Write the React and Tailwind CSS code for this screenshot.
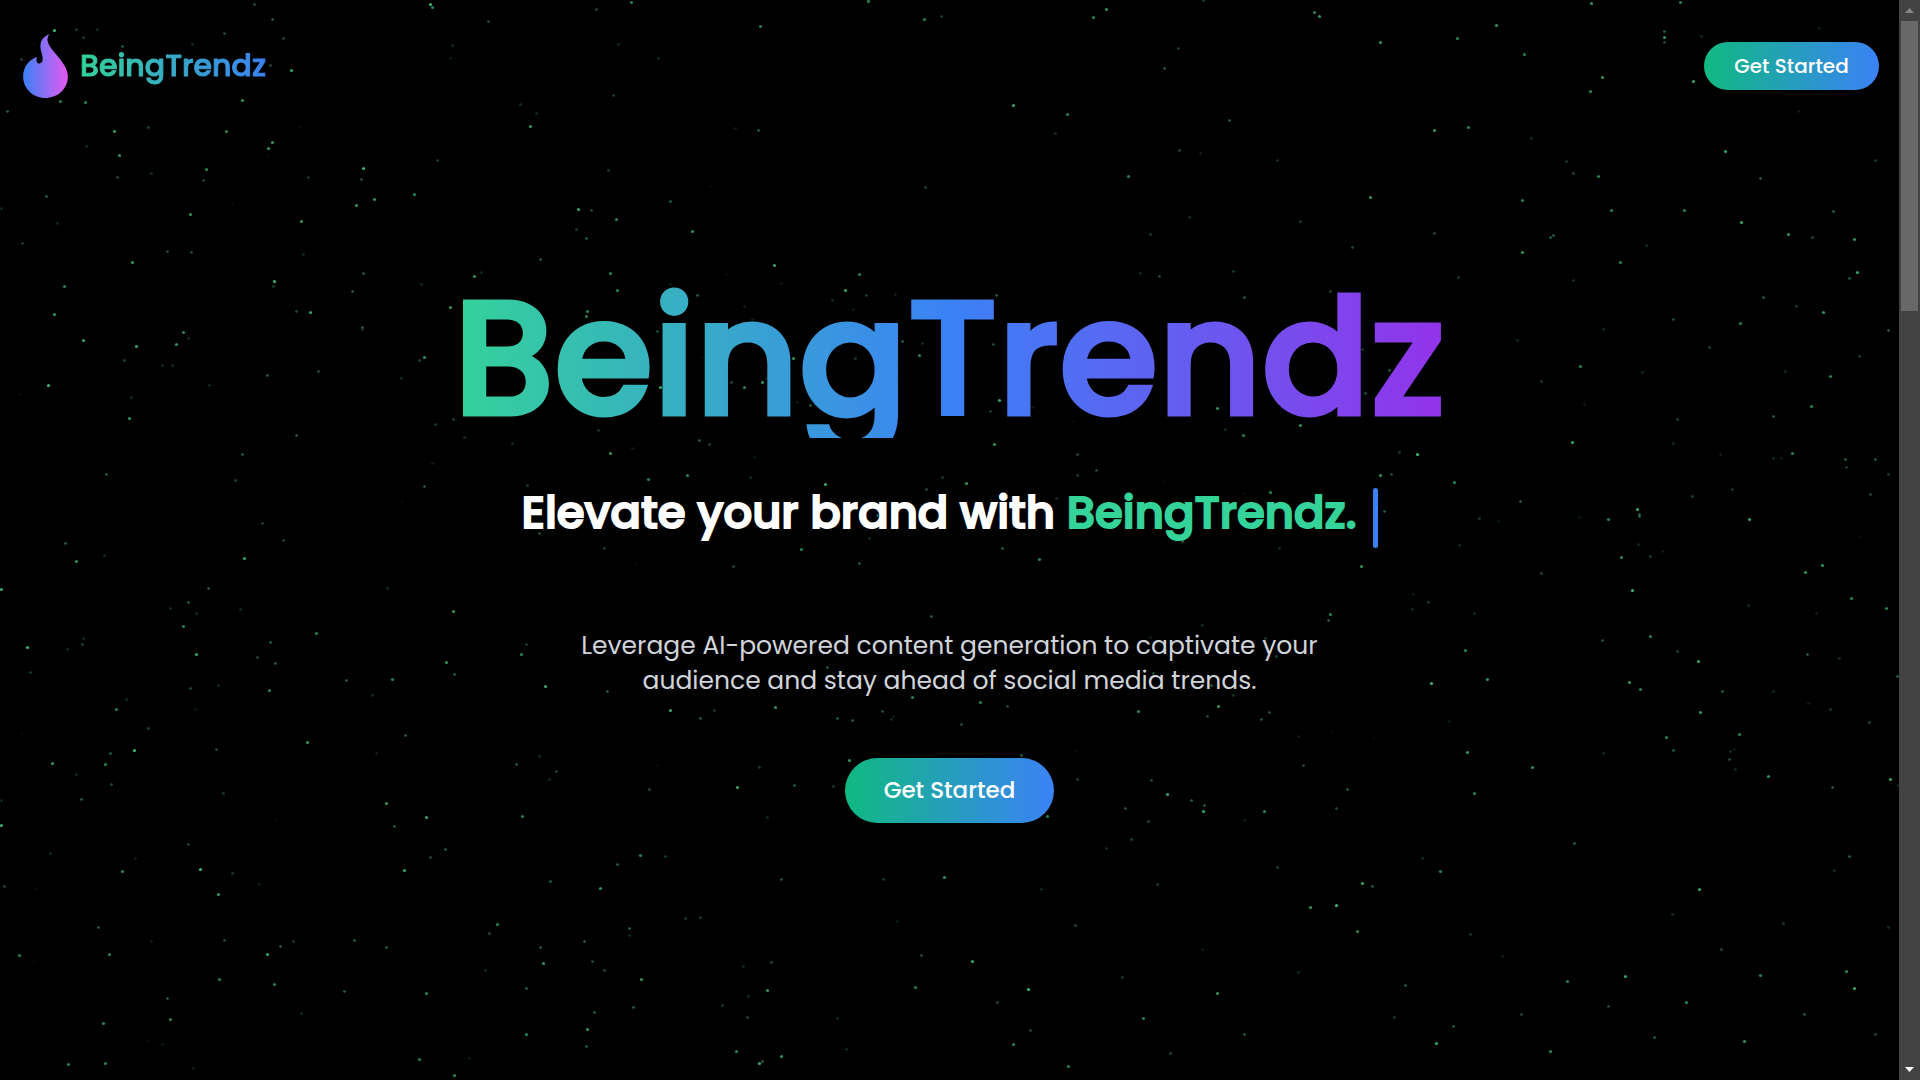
import React from "react";

// Each sector: origin, units per pixel on both axes, and [x, y, brightness 1-10] triples.
const SECTORS = [
  {
    ox: 0, oy: 0, sx: 3, sy: 3,
    stars: [
      [761,12,5],[816,58,6],[673,99,5],[848,115,5],[575,132,3],[811,194,5],[873,209,9],[727,300,8],[161,91,10],[229,87,4],[290,88,3],[250,112,4],[103,131,1],[367,139,6],[63,177,5],[179,302,7],[255,307,7],[20,332,6],[445,380,5],[343,389,2],[897,380,1],
    ],
  },
  {
    ox: 1660, oy: 0, sx: 3, sy: 3,
    stars: [[60,7,7],[12,94,6],[13,112,8],[13,125,5],[122,108,3],[477,85,2],[99,243,9],[415,333,2]],
  },
  {
    ox: 0, oy: 130, sx: 3, sy: 3,
    stars: [
      [343,4,8],[677,4,7],[257,49,3],[804,54,8],[817,36,8],[358,76,8],[801,76,1],[1311,91,4],[618,116,7],[453,128,3],[1089,115,10],[351,140,5],[609,149,5],[925,142,4],[1083,147,5],[137,197,6],[1242,192,7],[1121,206,8],[1068,224,8],[697,221,1],[2,233,3],[570,251,8],[170,279,3],[904,273,8],[65,340,4],[500,364,5],[574,367,5],[908,372,3],[396,395,8],[1088,429,6],[193,469,7],[822,453,10],[818,467,4],[1264,461,3],[1057,482,6],[889,543,5],[929,547,9],[162,552,8],[1085,590,6],[1085,596,3],[548,605,7],[565,625,3],[250,631,9],[528,641,8],[409,649,9],[371,691,5],[1271,681,8],[1256,691,5],[485,704,3],[515,704,3],[953,724,5],[802,734,6],[1204,744,3],[144,765,10],[628,766,3],[61,791,1],[393,800,3],[386,863,8],[1305,881,4],[888,915,6],[727,973,6],[1296,1000,2],[319,1032,6],[705,1051,5],[1273,1068,6],[1206,1113,1],[786,1180,2],
    ],
  },
  {
    ox: 440, oy: 270, sx: 3, sy: 3,
    stars: [
      [102,19,8],[122,7,3],[511,8,7],[531,61,7],[30,110,8],[441,124,7],[439,138,7],[691,41,2],[772,76,6],[860,12,1],[912,107,2],[1022,39,2],[1258,13,7],[1214,61,9],[1175,91,3],[1279,76,4],[1364,73,2],[1238,116,2],[937,148,2],[650,184,5],[785,261,1],[1059,263,8],[660,350,9],[872,335,5],[912,350,7],[967,335,8],[979,325,2],[1070,395,2],[1111,405,6],[1246,265,4],[1386,212,6],[1447,220,3],[1438,255,7],[40,448,5],[72,500,3],[217,520,3],[474,479,4],[511,549,8],[576,535,2],[778,510,6],[808,523,5],[941,562,2],
    ],
  },
  {
    ox: 940, oy: 270, sx: 3, sy: 3,
    stars: [
      [601,8,3],[657,19,5],[880,3,4],[1169,63,5],[913,80,6],[167,75,6],[158,223,5],[176,389,9],[151,424,4],[275,412,2],[399,454,1],[161,522,8],[412,553,5],[831,414,8],[854,476,3],[910,496,7],[1081,464,8],[1265,238,4],[1346,301,6],[1275,369,5],[1371,287,4],[1349,322,4],[1377,547,4],[1431,552,7],[1555,22,4],
    ],
  },
  {
    ox: 500, oy: 470, sx: 3, sy: 3,
    stars: [
      [82,45,4],[445,27,7],[560,16,7],[751,21,3],[974,42,9],[1279,56,5],[1326,20,4],[1397,38,8],[118,188,5],[312,233,4],[409,278,1],[698,289,5],[902,236,7],[1107,204,3],[1078,280,6],[719,133,4],[1132,136,6],[1507,235,6],[1617,267,7],
    ],
  },
  {
    ox: 980, oy: 470, sx: 3, sy: 3,
    stars: [[290,14,4],[349,1,5],[548,32,1],[228,83,3],[793,70,1],[871,67,7],[1199,15,8],[1232,11,5],[1212,124,6],[896,233,3],[1144,288,8],[606,214,6]],
  },
  {
    ox: 560, oy: 610, sx: 3, sy: 3,
    stars: [[1114,19,6],[801,171,6],[1057,260,7],[1261,275,7],[1342,288,5],[965,303,5],[992,328,3],[998,319,2],[1203,342,5],[1382,434,6],[1460,618,7]],
  },
  {
    ox: 1000, oy: 610, sx: 3, sy: 3,
    stars: [
      [989,12,7],[985,30,6],[605,46,3],[449,80,2],[796,84,4],[827,139,5],[882,91,3],[460,190,5],[634,225,6],[700,254,4],[655,289,8],[622,317,5],[415,304,7],[807,306,5],[782,328,5],[993,363,1],[894,379,2],[1120,384,1],[225,422,1],[910,465,5],[231,506,5],[454,509,5],[501,552,9],[572,569,6],[611,584,6],[609,604,9],[376,594,5],[443,632,5],[733,630,2],[792,604,7],[1008,595,5],[1042,537,6],[393,686,5],
    ],
  },
  {
    ox: 1400, oy: 400, sx: 3, sy: 3,
    stars: [
      [551,11,2],[1234,19,7],[1120,48,6],[831,58,5],[515,126,9],[820,129,3],[52,161,7],[960,161,2],[1119,175,3],[1142,175,2],[1177,160,7],[1335,178,6],[1425,178,6],[1339,202,4],[1463,223,4],[162,247,7],[996,268,4],[1411,281,5],[875,287,5],[360,304,6],[712,328,9],[716,341,6],[717,348,6],[236,353,4],[294,362,2],[537,350,2],[625,356,7],[1047,356,9],[1378,408,1],[177,436,3],[715,432,3],[786,454,2],[663,470,7],[749,469,4],[1265,494,8],[422,520,5],[1214,517,8],[696,570,10],[38,583,2],[83,606,4],[37,626,3],[223,640,3],[1353,594,7],[1044,616,3],[1459,624,7],[1249,640,2],[607,720,5],[750,708,7],[196,751,7],[831,754,5],[1221,763,6],[894,784,9],[1317,775,3],[94,850,10],[261,836,8],[688,845,8],[719,867,7],[965,874,6],[1120,872,3],[1223,909,2],[1490,829,6],[900,935,8],[1290,927,4],[146,963,2],[1406,966,5],[797,1011,7],[820,1049,6],[1018,1003,7],[200,1055,8],[610,1060,3],[990,1054,3],[1002,1047,2],[987,1078,5],[1004,1108,3],[396,1101,8],[1105,1127,8],[1470,1138,9],[1493,1156,3],[222,1179,7],[1296,1160,6],
    ],
  },
  {
    ox: 0, oy: 520, sx: 1.823, sy: 2.8,
    stars: [
      [478,9,3],[118,63,6],[516,57,5],[139,116,8],[189,97,3],[444,106,9],[1,193,9],[379,189,6],[705,190,3],[343,229,6],[310,247,3],[358,259,3],[438,250,3],[826,254,8],[333,296,7],[576,316,7],[152,329,3],[149,347,5],[122,360,3],[49,356,10],[492,341,6],[358,376,9],[469,384,5],[501,401,6],[813,398,8],[827,430,6],[54,426,4],[959,346,4],[950,376,7],[630,447,6],[714,445,7],[346,469,5],[398,463,3],[490,477,7],[678,491,3],[993,465,9],[1107,478,6],[229,502,3],[212,528,7],[355,529,2],[1221,532,9],[1276,555,6],[1301,533,4],[1412,524,8],[1526,553,6],[1554,559,6],[269,583,5],[38,597,1],[739,603,6],[559,621,8],[245,643,10],[394,641,5],[200,652,6],[685,652,2],[95,681,8],[192,682,7],[983,660,3],[941,682,6],[138,710,3],[1014,704,5],[1001,724,3],[203,738,5],[407,763,4],[148,781,6],[1,785,3],[704,791,8],[776,831,9],[718,857,6],[952,830,7],[2,854,9],[501,837,1],[1196,687,1],[1383,691,4],[1343,748,9],[1448,743,6],[1519,745,4],[1184,752,5],[1548,673,8],[1398,831,3],[343,907,5],[91,931,3],[246,946,2],[812,921,6],[783,943,5],[364,977,10],[222,983,7],[423,988,4],[736,981,9],[1166,938,7],[1212,941,4],[1124,964,6],[8,1024,5],[63,1030,1],[473,1020,2],[397,1048,8],[1003,1011,6],[1093,1030,8],[1423,1004,5],[178,1139,6],[906,1132,7],[892,1156,5],[1146,1142,6],[1146,1161,3],[1249,1115,4],[1277,1112,4],[408,1176,5],[275,1178,2],[535,1180,4],[511,1194,6],[646,1176,6],[704,1196,6],[486,1214,9],[198,1216,7],[35,1218,7],[60,1234,1],[985,1196,6],[1065,1179,6],[989,1240,8],[1079,1234,5],[1102,1261,5],[884,1261,3],[1355,1249,3],[1405,1238,5],[399,1286,7],[1168,1286,8],[500,1300,7],[628,1320,6],[776,1323,7],[958,1309,6],[1399,1315,8],[1364,1332,3],[304,1339,6],[1154,1363,6],[1316,1359,4],[1083,1378,6],[1362,1391,5],[309,1396,7],[548,1381,3],[187,1409,7],[1070,1424,8],[958,1438,7],[1526,1394,3],[269,1456,1],[296,1468,2],[1068,1474,6],[1341,1488,7],[1424,1500,8],[1390,1515,6],[1383,1521,9],[1542,1482,3],[764,1509,7],[124,1522,7],[192,1521,7],[352,1533,2],[827,1555,7],[855,1506,2],
    ],
  },
  {
    ox: 430, oy: 0, sx: 1, sy: 1,
    stars: [
      [0,4,10],[2,7,7],[22,45,3],[20,58,2],[58,21,5],[90,104,3],[100,126,8],[106,113,3],[166,9,5],[201,2,7],[330,26,7],[188,44,3],[228,58,3],[183,95,4],[178,170,4],[148,209,9],[161,210,5],[186,219,7],[156,238,6],[110,259,6],[146,229,4],[240,201,6],[262,231,8],[305,128,2],[328,130,6],[280,186,1],[344,265,9],[438,1,7],[494,19,7],[511,16,4],[495,187,5],[583,105,9],[637,114,7],[625,133,3],[663,17,7],[676,9,8],[734,68,6],[748,48,4],[773,0,4],[799,120,6],[749,150,5],[770,153,2],[698,176,7],[720,234,4],[759,217,3],[884,12,7],[889,16,8],[950,42,8],[1004,130,8],[1027,38,7],[1038,127,7],[1066,25,8],[1094,54,7],[1161,3,8],[1004,233,5],[940,197,8],[922,247,5],[870,221,4],[847,160,3],[1092,200,7],[1120,237,6],[1143,173,5],[1172,77,8],[1160,91,7],
    ],
  },
  {
    ox: 1500, oy: 130, sx: 1, sy: 1,
    stars: [
      [31,8,3],[66,31,4],[98,46,7],[111,80,7],[53,105,6],[22,122,8],[73,150,3],[120,132,7],[146,115,3],[184,80,7],[225,21,9],[260,48,6],[241,92,9],[288,104,8],[312,107,5],[333,81,6],[354,109,8],[357,142,9],[349,148,6],[375,30,4],[323,182,8],[296,176,4],[263,167,6],[240,193,7],[209,217,5],[173,189,5],[142,242,3],[103,199,3],[80,236,7],[41,251,4],[17,210,3],[388,200,6],[359,226,4],[330,246,7],[285,241,3],
    ],
  },
  {
    ox: 860, oy: 830, sx: 1, sy: 1,
    stars: [
      [23,49,4],[37,91,2],[84,47,8],[61,125,5],[112,131,9],[55,157,7],[137,172,5],[168,159,10],[170,200,5],[208,236,7],[153,214,7],[181,59,3],[215,95,5],[246,18,3],[262,147,4],[283,188,7],[310,223,5],[297,54,4],[342,119,2],[357,163,8],[384,204,6],[417,37,5],[438,142,3],[450,77,8],[476,75,10],[497,101,7],[502,53,9],[512,56,6],[562,28,3],[580,41,7],[545,155,6],[534,187,4],[576,213,9],[593,196,6],[610,104,4],[642,126,2],[661,184,5],[690,221,7],[707,151,7],[714,13,6],[748,176,5],[765,146,9],[794,207,6],[812,84,3],[826,172,7],[839,59,9],[861,119,5],[884,211,8],[900,145,7],[923,93,4],[944,184,6],[974,40,3],[986,141,7],[994,158,9],[1015,204,5],[989,26,6],[1028,97,3],
    ],
  },
];

const STARS = SECTORS.flatMap((s) =>
  s.stars.map(([x, y, b]) => ({
    cx: Math.round(s.ox + x / s.sx) + 0.5,
    cy: Math.round(s.oy + y / s.sy) + 0.5,
    r: b > 6 ? 1.6 : 1.3,
    opacity: b / 11,
  })),
);

function Starfield() {
  return (
    <svg className="pointer-events-none absolute inset-0 h-full w-full" aria-hidden="true">
      {STARS.map((s, i) => (
        <circle key={i} cx={s.cx} cy={s.cy} r={s.r} fill="#46c47c" opacity={s.opacity} />
      ))}
    </svg>
  );
}

function Flame() {
  return (
    <svg viewBox="69 98 135 193" className="h-16 w-[45px]" aria-hidden="true">
      <defs>
        <linearGradient id="flame" x1="0" x2="1" y1="0" y2="0">
          <stop offset="0" stopColor="#3b82f6" />
          <stop offset="1" stopColor="#e359f2" />
        </linearGradient>
      </defs>
      <path
        fill="url(#flame)"
        d="M148 98C139 112 141 122 154 142C172 166 204 194 204 226C204 262 174 291 136 291C99 291 69 262 69 226C69 196 88 174 111 167C107 177 110 186 118 187C130 186 129 171 126 160C123 148 119 138 122 126C125 112 137 103 148 98Z"
      />
    </svg>
  );
}

function Header() {
  return (
    <header className="flex items-center justify-between pt-[34px] pr-5 pl-[23px]">
      <a href="#" className="flex items-center gap-3">
        <Flame />
        <span className="bg-linear-to-r/srgb from-[#34d399] to-[#3b82f6] bg-clip-text text-[30px] leading-10 font-medium text-transparent [-webkit-text-stroke:1px_transparent]">
          BeingTrendz
        </span>
      </a>
      <button className="h-12 w-[175px] rounded-full bg-linear-to-r/srgb from-[#10b981] to-[#3b82f6] text-xl font-medium text-white">
        Get Started
      </button>
    </header>
  );
}

function Hero() {
  return (
    <main className="flex flex-col items-center pt-[180px] text-center">
      <h1 className="bg-linear-to-r/srgb from-[#34d399] via-[#3b82f6] to-[#9333ea] bg-clip-text text-[160px] leading-none font-medium text-transparent [-webkit-text-stroke:5px_transparent]">
        BeingTrendz
      </h1>
      <h2 className="mt-[50px] flex items-start gap-4 text-[45px] leading-[50px] font-medium text-white">
        <span className="[-webkit-text-stroke:2px_currentColor]">
          Elevate your brand with <span className="text-[#34d399]">BeingTrendz.</span>
        </span>
        <span className="h-[60px] w-[5px] rounded-full bg-[#3b82f6]" />
      </h2>
      <p className="mt-20 w-[768px] text-[25px] leading-[35px] text-[#d1d5db]">
        Leverage AI-powered content generation to captivate your audience and stay ahead of social media trends.
      </p>
      <button className="mt-[60px] h-[65px] w-[209px] rounded-full bg-linear-to-r/srgb from-[#10b981] to-[#3b82f6] text-[23px] font-medium text-white">
        Get Started
      </button>
    </main>
  );
}

function ScrollRail() {
  return (
    <aside className="flex w-[21px] shrink-0 flex-col items-center bg-[#424242]" aria-label="Page scroll">
      <button className="flex h-[21px] w-full shrink-0 items-center justify-center" aria-label="Scroll up">
        <svg viewBox="0 0 9 5" className="h-[5px] w-[9px]">
          <path d="M0 5L4.500 0L9 5Z" fill="#868686" />
        </svg>
      </button>
      <div className="h-[290px] w-[17px] bg-[#686868]" />
      <div className="flex-1" />
      <button className="flex h-[21px] w-full shrink-0 items-center justify-center" aria-label="Scroll down">
        <svg viewBox="0 0 9 5" className="h-[5px] w-[9px]">
          <path d="M0 0L4.500 5L9 0Z" fill="#ffffff" />
        </svg>
      </button>
    </aside>
  );
}

export default function App() {
  return (
    <div className="flex h-screen bg-black font-[Poppins,Inter,sans-serif]">
      <div className="relative min-w-0 flex-1 overflow-hidden">
        <Starfield />
        <div className="relative">
          <Header />
          <Hero />
        </div>
      </div>
      <ScrollRail />
    </div>
  );
}
